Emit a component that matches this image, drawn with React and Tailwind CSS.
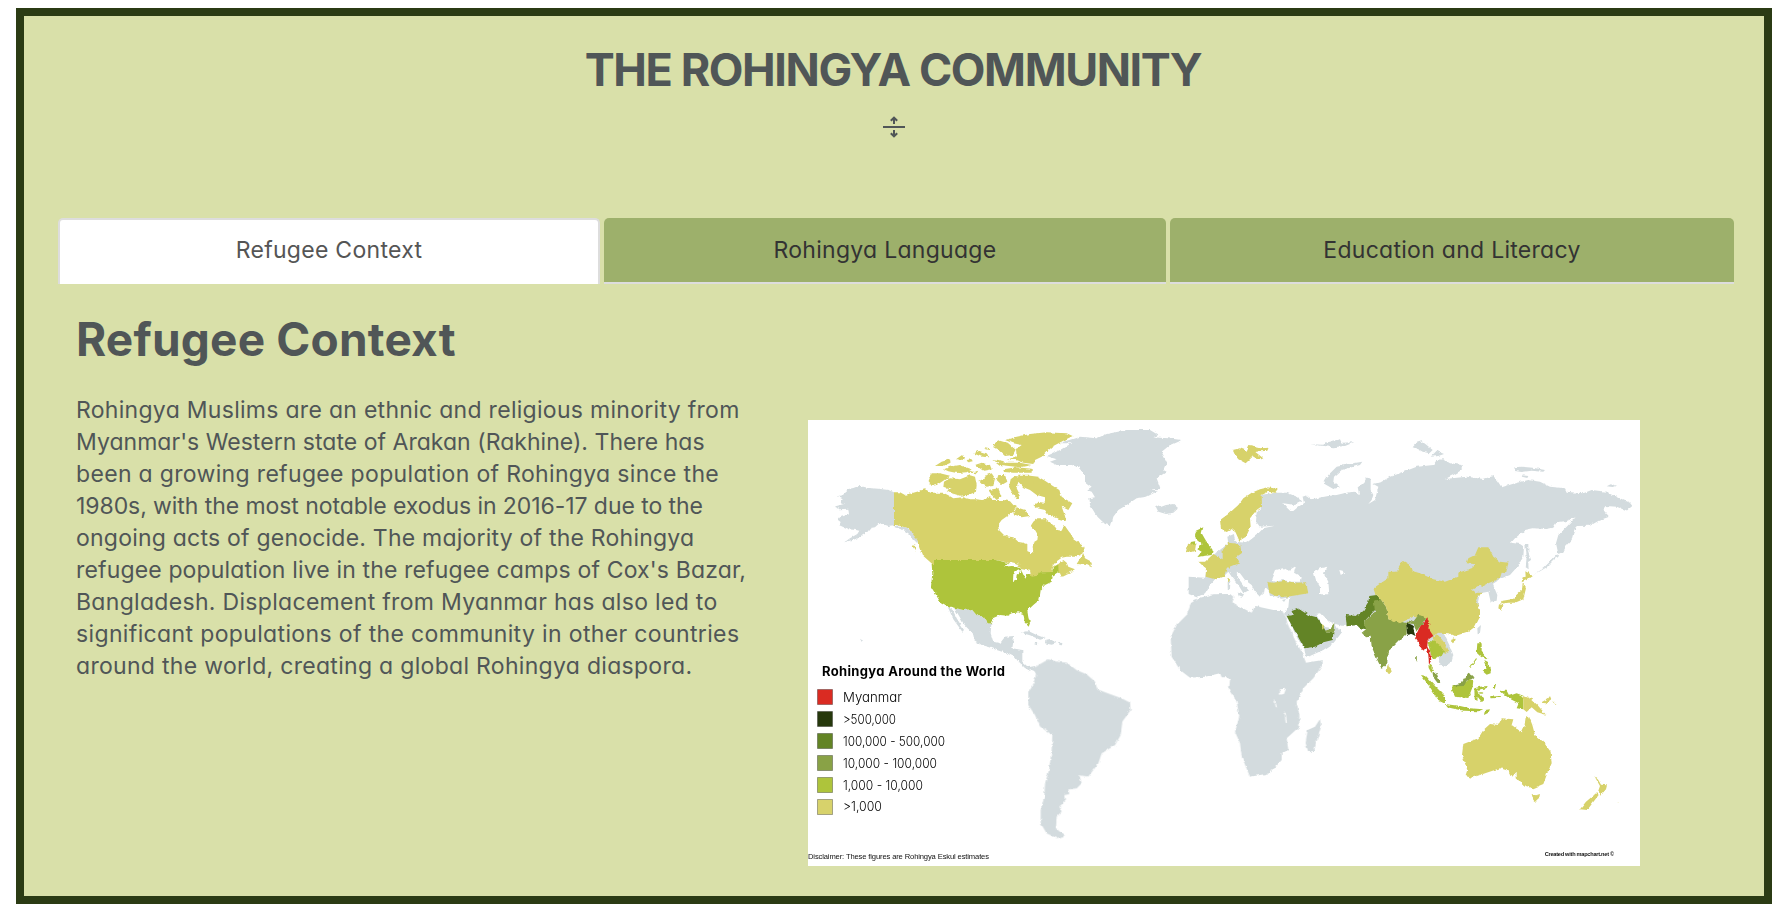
const GREY = "#d3dbde";
const YELLOW = "#d7d26b";
const LIME = "#aec43b";
const OLIVE = "#89a246";
const FOREST = "#638425";
const DARK = "#26380c";
const RED = "#da2b22";

// Each region is drawn on its own tile at three units per pixel.
const tiles = [
  {
    name: "north-america",
    transform: "translate(800 410) scale(.33333)",
    shapes: [
      [GREY, "282,247 265,240 235,236 205,234 178,227 160,234 145,237 125,256 111,259 128,268 122,277 135,281 101,290 118,298 145,296 147,313 120,322 114,330 122,336 118,346 145,358 168,360 178,362 172,372 150,385 133,397 165,388 185,378 200,368 212,354 225,352 238,340 262,348 282,346 300,350 318,352 335,366 348,380 355,390 352,400 340,388 325,370 310,360 284,352"],
      [GREY, "442,588 490,600 515,598 530,616 548,615 560,635 574,642 572,670 580,695 600,700 615,680 642,678 640,695 637,715 667,720 667,755 685,772 705,768 710,785 695,780 688,782 660,762 645,742 620,730 590,720 570,712 545,705 522,690 520,672 500,652 490,640 470,605 460,592"],
      [GREY, "443,590 458,600 470,625 492,660 487,665 460,628"],
      [GREY, "662,668 685,663 710,675 737,685 720,689 690,676"],
      [GREY, "736,690 750,687 770,699 755,704 735,700"],
      [GREY, "704,698 715,700 712,706 703,703"],
      [GREY, "778,698 787,699 786,706 778,705"],
      [GREY, "180,686 189,692 186,697"],
      [YELLOW, "282,247 300,247 315,255 345,246 375,238 395,248 430,248 445,256 460,265 490,262 510,268 530,268 545,270 570,262 580,270 610,270 630,274 640,285 650,290 640,305 622,318 605,330 594,345 597,360 615,378 640,382 655,395 672,398 682,402 682,420 695,430 700,422 696,400 712,390 714,375 705,360 692,348 700,335 712,325 735,325 748,335 765,350 772,360 785,362 793,345 805,362 815,375 820,388 835,398 853,410 855,425 840,435 825,440 800,440 785,443 768,455 755,470 775,462 790,450 800,458 805,470 825,478 800,490 785,500 780,490 775,488 772,470 760,470 755,487 720,488 712,497 690,510 675,513 690,500 680,485 665,478 640,462 590,450 405,450 405,462 397,462 370,438 360,410 352,390 325,355 290,345 282,345"],
      [YELLOW, "627,230 632,208 645,198 665,200 690,197 715,200 735,212 755,226 778,240 785,260 817,280 805,300 785,290 795,318 798,332 770,325 745,315 735,300 712,295 700,285 715,275 735,278 735,262 710,255 690,240 670,232 655,215 650,235 660,255 650,268 635,245"],
      [YELLOW, "385,215 395,190 420,190 450,197 430,212 410,225 395,228"],
      [YELLOW, "432,215 450,205 480,208 510,196 525,200 530,225 528,245 505,255 480,257 455,250 440,240 455,235 430,232"],
      [YELLOW, "405,168 425,155 450,148 452,158 430,168"],
      [YELLOW, "432,178 450,170 480,165 515,178 500,187 470,189 445,184"],
      [YELLOW, "468,148 485,136 495,140 492,150"],
      [YELLOW, "520,130 535,122 560,130 568,142 545,140"],
      [YELLOW, "525,165 545,158 570,165 575,178 550,182"],
      [YELLOW, "583,100 600,92 625,100 648,120 640,135 615,138 595,120 580,112"],
      [YELLOW, "580,150 620,158 660,158 695,165 660,172 600,165"],
      [YELLOW, "610,178 650,172 695,176 695,188 640,188 612,186"],
      [YELLOW, "615,90 650,80 690,72 740,67 800,70 818,78 790,92 760,108 740,125 725,140 705,150 700,162 670,158 640,148 620,150 650,138 648,118 665,105 640,100"],
      [YELLOW, "535,212 550,208 560,195 575,190 585,205 580,228 560,230 545,222"],
      [YELLOW, "595,195 615,195 622,215 605,225 590,210"],
      [YELLOW, "565,240 595,235 605,260 590,270 575,255"],
      [YELLOW, "655,197 690,197 705,215 690,228 665,222"],
      [YELLOW, "650,292 675,300 690,318 665,322 640,312"],
      [YELLOW, "500,178 520,186 535,182 530,190 505,188"],
      [YELLOW, "555,112 566,114 568,120 556,118"],
      [YELLOW, "500,150 515,148 518,154 504,157"],
      [YELLOW, "850,430 830,462 862,466 875,472 875,455 855,445"],
      [YELLOW, "785,495 825,483 800,494 788,500"],
      [YELLOW, "335,405 345,408 348,425"],
      [LIME, "405,462 405,450 590,450 625,460 665,478 690,488 695,500 712,497 720,487 755,486 762,470 775,468 776,488 758,500 755,515 735,525 722,540 718,570 700,585 682,602 685,622 690,640 686,650 675,638 670,612 655,607 635,610 622,617 600,615 578,625 572,642 560,635 548,615 530,616 515,598 490,600 442,588 420,575 405,550 393,530 397,490 395,462"],
      ["#ffffff", "612,470 635,457 658,462 652,470 636,468"],
      ["#ffffff", "639,516 640,490 655,478 662,484 650,494 648,512"],
      ["#ffffff", "662,477 690,482 692,492 682,492 676,506 668,490"],
    ],
  },
  {
    name: "south-america",
    transform: "translate(800 640) scale(.33333)",
    shapes: [
      [GREY, "700,85 720,72 745,58 770,65 800,68 830,90 860,103 885,125 892,148 930,162 965,175 990,188 992,210 967,245 962,285 945,315 905,340 895,370 865,410 838,406 845,430 830,445 805,448 808,462 793,465 795,485 778,500 785,515 770,530 768,565 795,588 770,594 740,580 722,550 722,510 733,470 735,430 747,390 755,330 757,285 720,260 705,225 685,195 685,155 700,130 708,105"],
    ],
  },
  {
    name: "north-atlantic",
    transform: "translate(1040 410) scale(.33333)",
    shapes: [
      [GREY, "20,138 60,120 95,100 60,100 70,95 120,80 170,85 200,72 260,60 330,60 355,75 340,82 385,85 424,90 390,105 365,125 380,155 370,180 380,185 350,205 362,237 330,238 355,242 320,260 290,265 260,285 235,300 220,320 213,347 195,342 170,318 150,285 148,265 165,262 155,245 140,240 155,230 135,215 135,195 115,172 95,165 50,165 30,155 50,148"],
      [GREY, "345,285 360,292 378,285 400,282 415,295 400,308 378,312 355,305"],
    ],
  },
  {
    name: "africa",
    transform: "translate(1140 560) scale(.33333)",
    shapes: [
      [GREY, "160,120 175,115 220,103 270,102 280,110 275,125 300,140 335,158 345,138 400,150 425,150 440,175 440,185 465,240 485,275 498,308 548,300 548,315 520,355 490,385 470,425 478,465 478,500 440,535 445,570 425,580 425,600 390,640 330,650 305,590 300,550 285,515 298,470 290,425 267,390 270,360 262,352 245,352 240,340 195,350 150,353 120,330 95,290 92,230 110,195 140,165 150,135"],
      [GREY, "540,477 543,500 522,572 505,577 497,550 503,510 525,500"],
      ["#ffffff", "420,388 438,386 432,402 420,404"],
      ["#ffffff", "402,418 405,418 411,443 407,440"],
      ["#ffffff", "434,458 437,458 441,490 437,488"],
    ],
  },
  {
    name: "eurasia",
    transform: "translate(1160 410) scale(.33333)",
    shapes: [
      [GREY, "345,248 380,248 415,262 423,275 405,285 370,280 382,295 400,303 415,290 432,280 428,260 440,256 455,268 485,262 505,258 530,255 552,250 580,245 598,255 593,232 610,222 620,202 632,210 632,240 640,255 635,270 625,282 645,270 655,230 640,222 665,215 690,200 720,190 770,170 820,165 830,150 850,148 870,160 905,165 905,180 880,195 855,207 920,200 970,207 1000,198 1012,212 1025,232 1065,220 1105,210 1140,215 1170,230 1215,235 1220,245 1270,250 1295,240 1340,245 1380,265 1410,278 1417,288 1400,302 1370,290 1340,288 1330,300 1348,320 1320,330 1290,347 1250,348 1240,370 1235,390 1220,405 1210,425 1195,432 1188,400 1195,375 1220,350 1247,322 1220,333 1190,337 1180,353 1160,357 1120,355 1095,360 1065,385 1053,398 1080,402 1092,410 1090,440 1072,470 1050,495 1025,505 998,522 1012,555 1010,572 992,575 985,545 960,550 950,600 900,640 850,665 858,685 868,705 880,735 875,755 852,772 835,755 830,720 790,670 740,640 640,640 600,648 545,647 520,640 500,630 480,610 468,612 475,625 490,650 520,655 522,640 530,655 547,665 520,700 490,720 450,738 438,740 433,715 415,690 380,620 372,612 385,592 388,562 365,566 330,558 325,540 315,530 312,550 300,560 285,545 275,525 255,510 240,490 230,485 235,505 250,525 264,542 250,550 235,525 215,500 205,485 190,500 165,508 150,525 135,550 110,562 86,552 86,500 135,503 145,455 160,435 190,412 205,400 202,380 222,372 225,395 260,398 290,375 310,355 345,347 300,350 288,335 290,305 306,288 300,255"],
      ["#ffffff", "335,512 348,480 372,474 385,482 408,468 402,488 425,502 422,515 395,515 370,510 345,515"],
      ["#ffffff", "462,490 480,475 502,470 492,490 505,515 508,553 480,553 480,530 468,510"],
      ["#ffffff", "538,480 548,482 552,492 542,494"],
      [GREY, "490,220 505,195 530,170 580,160 607,155 600,165 545,180 522,200 520,215 540,232 520,237"],
      [GREY, "450,103 490,104 500,97 540,88 545,98 583,97 555,108 520,112 490,108"],
      [GREY, "203,515 211,513 210,538 203,536"],
      [GREY, "233,550 252,552 248,560 235,555"],
      [GREY, "366,570 378,567 372,576"],
      [YELLOW, "204,506 210,504 209,516 204,515"],
      [YELLOW, "218,120 240,115 260,122 268,105 300,112 327,110 322,122 285,125 310,145 300,150 280,138 257,160 235,148 225,135"],
      [YELLOW, "180,330 205,312 235,285 250,265 275,248 300,238 325,232 353,237 345,248 325,245 305,255 306,288 290,300 270,325 272,350 258,380 238,392 228,370 220,355 200,366 183,358"],
      [YELLOW, "78,425 84,402 100,395 108,402 105,422 82,430"],
      [LIME, "105,375 108,362 130,352 125,370 138,392 158,420 155,435 112,441 125,425 112,418 125,402 108,388"],
      [LIME, "92,396 105,394 110,403 95,404"],
      [YELLOW, "115,455 135,455 160,432 188,448 188,420 205,398 240,402 245,430 230,440 238,460 200,475 192,500 165,508 137,500 138,475"],
      [YELLOW, "322,515 338,518 375,513 410,518 438,517 445,550 400,557 375,560 345,557 328,548"],
      [FOREST, "380,618 398,615 395,600 412,594 445,615 470,622 490,650 500,668 520,668 518,690 490,697 465,710 433,715 400,655"],
      [OLIVE, "495,662 510,658 523,642 520,668 500,668"],
      [YELLOW, "485,643 491,645 491,656 487,655"],
      [FOREST, "557,615 590,618 610,600 625,575 628,558 650,555 665,572 650,580 645,600 612,635 620,658 600,655 590,645 560,649"],
      [OLIVE, "641,572 662,568 678,590 685,625 740,640 740,670 700,710 683,725 682,760 665,777 652,750 635,710 632,680 618,682 605,668 618,658 612,635 645,605"],
      [YELLOW, "682,765 692,775 695,785 685,795 680,785"],
    ],
  },
  {
    name: "east-asia",
    transform: "translate(1400 410) scale(.33333)",
    shapes: [
      [YELLOW, "-80,535 -58,520 -35,505 -35,485 -10,485 8,452 30,465 35,482 60,490 100,508 135,515 175,500 175,488 215,475 228,463 200,460 205,445 225,435 235,412 265,412 280,440 300,455 325,458 318,490 305,488 300,505 265,520 245,532 243,522 215,540 225,548 245,548 228,570 240,600 240,620 225,650 205,665 165,678 148,670 115,668 95,680 85,660 80,628 40,620 0,640 -35,625 -42,590 -58,568 -75,550"],
      [YELLOW, "153,690 165,685 168,692 158,700"],
      [YELLOW, "376,484 400,497 385,508 365,517 368,502 377,500"],
      [YELLOW, "368,518 378,535 370,568 345,578 325,578 300,582 308,572 335,568 355,550 366,540"],
      [YELLOW, "297,583 310,585 305,602 295,595"],
      [GREY, "376,402 385,402 385,425 394,452 385,458 386,478 377,472 380,440"],
      [GREY, "472,433 474,438 440,472 400,496 430,475"],
      [GREY, "232,655 243,645 240,668 233,670"],
      [GREY, "38,112 50,98 65,94 80,105 98,120 88,130 68,125 55,118"],
      [GREY, "92,140 110,122 132,132 115,138"],
      [GREY, "343,172 365,170 398,173 435,180 430,185 395,182 365,186 345,183"],
      [GREY, "365,196 385,198 382,204 366,200"],
      [GREY, "620,229 632,223 648,227 638,231"],
      [GREY, "22,628 40,626 42,634 24,636"],
    ],
  },
  {
    name: "south-east-asia-oceania",
    transform: "translate(1340 580) scale(.33333)",
    shapes: [
      [OLIVE, "200,125 222,122 235,105 250,108 255,118 240,140 228,155 222,132 202,130"],
      [GREY, "203,117 220,116 220,124 203,125"],
      [DARK, "198,128 210,132 222,138 220,148 226,168 215,162 202,165"],
      [YELLOW, "278,172 292,162 305,178 318,195 328,215 315,222 300,200 282,190"],
      [LIME, "262,182 285,185 300,195 312,215 305,228 292,230 285,238 275,232"],
      [RED, "262,112 268,130 265,145 280,168 263,180 262,200 270,215 274,240 267,255 265,225 260,205 245,210 238,190 225,170 240,140"],
      [LIME, "265,252 272,258 282,272 274,278 266,264"],
      [OLIVE, "277,275 290,280 302,312 292,308 280,292"],
      [LIME, "243,285 258,288 285,318 315,348 315,370 295,360 272,325"],
      [LIME, "315,372 360,378 390,385 430,388 415,394 370,392 318,381"],
      [LIME, "435,390 450,388 445,398 432,405"],
      [LIME, "338,315 360,318 385,300 400,300 398,320 385,354 345,350 336,330"],
      [OLIVE, "338,314 365,308 385,278 404,290 395,298 380,302 372,318 345,319"],
      [LIME, "403,325 420,320 443,318 440,324 412,330 414,338 430,336 420,345 432,362 425,366 413,350 412,366 404,360"],
      [LIME, "460,312 468,312 464,328 459,322"],
      [LIME, "450,350 480,348 478,354 452,355"],
      [LIME, "412,190 425,190 425,215 442,235 438,238 420,225 410,215"],
      [LIME, "430,240 440,245 452,262 452,280 440,284 428,274 440,265"],
      [LIME, "408,235 411,236 392,264 390,262"],
      [LIME, "480,332 500,332 508,347 530,340 550,347 550,388 530,385 536,370 512,358 498,348"],
      [YELLOW, "550,347 575,358 595,378 618,404 592,397 575,382 560,396 550,388"],
      [YELLOW, "602,368 625,355 630,348 634,358 618,370"],
      [YELLOW, "640,362 652,376 648,378"],
      [YELLOW, "370,492 415,475 430,450 450,432 475,435 485,415 520,418 515,435 545,457 553,440 558,405 568,412 577,435 585,465 610,485 632,515 635,550 622,580 610,612 580,625 548,615 530,595 530,575 515,592 505,572 480,565 440,578 420,585 395,593 376,588 382,570 366,525"],
      [YELLOW, "575,642 588,646 600,642 597,657 588,665 580,660"],
      [YELLOW, "763,588 775,600 783,614 801,616 798,628 782,647 775,632 780,618"],
      [YELLOW, "768,640 776,645 757,670 742,690 720,688 738,665"],
      [YELLOW, "833,665 836,665 836,668 833,668"],
      [OLIVE, "228,228 230,228 231,245 228,240"],
    ],
  },
];

const legend = [
  [RED, "Myanmar", 59],
  [DARK, ">500,000", 53],
  [FOREST, "100,000 - 500,000", 102],
  [OLIVE, "10,000 - 100,000", 94],
  [LIME, "1,000 - 10,000", 80],
  [YELLOW, ">1,000", 39],
];

function WorldMap() {
  return (
    <svg
      className="block h-[446px] w-[832px] shrink-0 bg-white"
      viewBox="808 420 832 446"
      role="img"
      aria-label="Rohingya Around the World"
    >
      <defs>
        <filter id="coast" x="808" y="420" width="832" height="446" filterUnits="userSpaceOnUse">
          <feTurbulence type="fractalNoise" baseFrequency="0.22" numOctaves="3" seed="4" />
          <feDisplacementMap in="SourceGraphic" scale="3.2" xChannelSelector="R" yChannelSelector="G" />
        </filter>
      </defs>
      <g filter="url(#coast)">
        {tiles.map((tile) => (
          <g key={tile.name} transform={tile.transform}>
            {tile.shapes.map(([fill, points], i) => (
              <polygon key={i} fill={fill} points={points} />
            ))}
          </g>
        ))}
      </g>
      <g fontFamily="Inter, sans-serif" fill="#000">
        <text x="822" y="676" fontSize="13" fontWeight="700" textLength="183">
          Rohingya Around the World
        </text>
        {legend.map(([fill, label, width], i) => (
          <g key={label}>
            <rect x="817.5" y={689.5 + i * 22} width="15" height="15" fill={fill} stroke="#000" strokeOpacity=".3" />
            <text x="843" y={701.7 + i * 21.95} fontSize="13" fontWeight="300" textLength={width} lengthAdjust="spacingAndGlyphs">
              {label}
            </text>
          </g>
        ))}
      </g>
      <g fontFamily="Liberation Sans, sans-serif" fill="#111">
        <text x="808" y="859.3" fontSize="7.6" textLength="181">
          Disclaimer: These figures are Rohingya Eskul estimates
        </text>
        <text x="1544.7" y="855.7" fontSize="5.6" fontWeight="700" textLength="69.5">
          Created with mapchart.net ©
        </text>
      </g>
    </svg>
  );
}

const lines = [
  ["Rohingya Muslims are an ethnic and religious minority from", "tracking-[0.29px]"],
  ["Myanmar's Western state of Arakan (Rakhine). There has", "tracking-[0.03px]"],
  ["been a growing refugee population of Rohingya since the", "tracking-[0.33px]"],
  ["1980s, with the most notable exodus in 2016-17 due to the", "tracking-[-0.07px]"],
  ["ongoing acts of genocide. The majority of the Rohingya", "tracking-[0.22px]"],
  ["refugee population live in the refugee camps of Cox's Bazar,", "tracking-[0.15px]"],
  ["Bangladesh. Displacement from Myanmar has also led to", "tracking-[0.31px]"],
  ["significant populations of the community in other countries", "tracking-[0.36px]"],
  ["around the world, creating a global Rohingya diaspora.", "tracking-[0.3px]"],
];

export default function App() {
  return (
    <div className="h-[922px] w-[1784px] overflow-hidden bg-white pt-2 pl-4 font-[Inter,sans-serif] [font-feature-settings:'cv11']">
      <main className="flex h-[896px] w-[1756px] flex-col border-8 border-[#2b3b14] bg-[#d9e0a9] text-[#505657]">
        <header className="flex h-[202px] flex-col items-center pt-[27px]">
          <h1 className="mr-[2px] text-[45px] leading-[54px] font-bold tracking-[-1.4px] whitespace-nowrap">THE ROHINGYA COMMUNITY</h1>
          <svg className="mt-[19px] h-[22px] w-[22px]" viewBox="0 0 22 22" fill="none" stroke="currentColor" strokeWidth="2">
            <path d="M0 11h22M11 8V2M7.8 4.8L11 1.7l3.2 3.1M11 14v6M7.8 17.2l3.2 3.1 3.2-3.1" />
          </svg>
        </header>

        <nav className="ml-[34px] flex h-[66px] gap-1 text-[23px] tracking-[0.28px] text-[#333]">
          <button className="w-[542px] rounded-t-[5px] border-2 border-b-0 border-[#ddd] bg-white pb-1 text-[#555]">Refugee Context</button>
          <button className="w-[562px] rounded-t-[5px] border-b-2 border-[#ddd] bg-[#9db06b]">Rohingya Language</button>
          <button className="w-[564px] rounded-t-[5px] border-b-2 border-[#ddd] bg-[#9db06b]">Education and Literacy</button>
        </nav>

        <div className="flex pl-[52px]">
          <section className="w-[732px] pt-[27px]">
            <h2 className="text-[46px] leading-[56px] font-bold tracking-[0.2px] whitespace-nowrap">Refugee Context</h2>
            <p className="mt-[27px] text-[23px] leading-8 whitespace-nowrap">
              {lines.map(([text, tracking]) => (
                <span key={text} className={`block ${tracking}`}>{text}</span>
              ))}
            </p>
          </section>
          <div className="pt-[136px]">
            <WorldMap />
          </div>
        </div>
      </main>
    </div>
  );
}
